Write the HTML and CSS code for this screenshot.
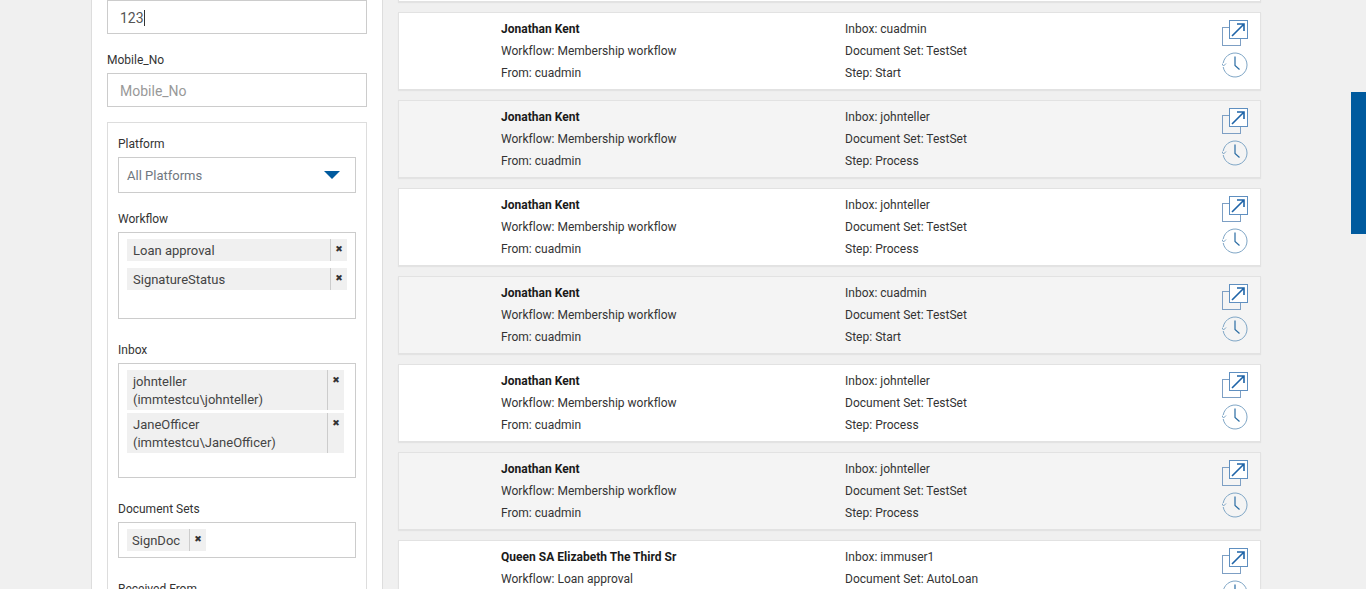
FILE: index.html
```html
<!DOCTYPE html>
<html lang="en">
<head>
    <meta charset="UTF-8">
    <title>Inbox search</title>
    <link rel="stylesheet" href="styles.css">
</head>
<body>
    <svg class="icon-defs" width="0" height="0">
        <symbol id="icon-open" viewBox="0 0 27 27">
            <rect x="0.5" y="7.5" width="18" height="18" fill="none" stroke="#7d9fc4"/>
            <rect x="7.5" y="0.5" width="18" height="18" fill="#fff" stroke="#5f8fc0"/>
            <path d="M10 16 L22 4 M15 4 H22 V11" fill="none" stroke="#1f64a8" stroke-width="1.6"/>
        </symbol>
        <symbol id="icon-history" viewBox="0 0 27 27">
            <path d="M1.2 12 A12 12 0 1 1 1.2 16" fill="none" stroke="#7fa6c6" stroke-width="1"/>
            <path d="M-0.5 12 L1.5 15 L4 12.5" fill="none" stroke="#7fa6c6" stroke-width="1"/>
            <path d="M13 5.5 V14.5 L17.5 18.5" fill="none" stroke="#2a6ca3" stroke-width="1.2"/>
        </symbol>
    </svg>

    <div class="page">
        <aside class="sidebar">
            <div class="field field-cut">
                <div class="text-input value-input">123<span class="caret"></span></div>
            </div>
            <div class="field">
                <label class="field-label">Mobile_No</label>
                <div class="text-input placeholder">Mobile_No</div>
            </div>
            <div class="filter-box">
                <label class="field-label">Platform</label>
                <div class="select-box">
                    <span>All Platforms</span>
                    <span class="select-arrow"></span>
                </div>

                <label class="field-label">Workflow</label>
                <div class="tag-box workflow-box">
                    <div class="tag tag-full"><span class="tag-text">Loan approval</span><span class="tag-remove">✖</span></div>
                    <div class="tag tag-full"><span class="tag-text">SignatureStatus</span><span class="tag-remove">✖</span></div>
                </div>

                <label class="field-label">Inbox</label>
                <div class="tag-box inbox-box">
                    <div class="tag tag-wrap"><span class="tag-text">johnteller<br>(immtestcu\johnteller)</span><span class="tag-remove">✖</span></div>
                    <div class="tag tag-wrap"><span class="tag-text">JaneOfficer<br>(immtestcu\JaneOfficer)</span><span class="tag-remove">✖</span></div>
                </div>

                <label class="field-label">Document Sets</label>
                <div class="tag-box docset-box">
                    <div class="tag"><span class="tag-text">SignDoc</span><span class="tag-remove">✖</span></div>
                </div>

                <label class="field-label">Received From</label>
            </div>
        </aside>

        <main class="results">
            <div class="row row-cut"></div>

            <div class="row">
                <div class="cell">
                    <strong>Jonathan Kent</strong>
                    <span>Workflow: Membership workflow</span>
                    <span>From: cuadmin</span>
                </div>
                <div class="cell">
                    <span>Inbox: cuadmin</span>
                    <span>Document Set: TestSet</span>
                    <span>Step: Start</span>
                </div>
                <div class="row-actions">
                    <svg width="27" height="27"><use href="#icon-open"/></svg>
                    <svg width="27" height="27"><use href="#icon-history"/></svg>
                </div>
            </div>

            <div class="row row-alt">
                <div class="cell">
                    <strong>Jonathan Kent</strong>
                    <span>Workflow: Membership workflow</span>
                    <span>From: cuadmin</span>
                </div>
                <div class="cell">
                    <span>Inbox: johnteller</span>
                    <span>Document Set: TestSet</span>
                    <span>Step: Process</span>
                </div>
                <div class="row-actions">
                    <svg width="27" height="27"><use href="#icon-open"/></svg>
                    <svg width="27" height="27"><use href="#icon-history"/></svg>
                </div>
            </div>

            <div class="row">
                <div class="cell">
                    <strong>Jonathan Kent</strong>
                    <span>Workflow: Membership workflow</span>
                    <span>From: cuadmin</span>
                </div>
                <div class="cell">
                    <span>Inbox: johnteller</span>
                    <span>Document Set: TestSet</span>
                    <span>Step: Process</span>
                </div>
                <div class="row-actions">
                    <svg width="27" height="27"><use href="#icon-open"/></svg>
                    <svg width="27" height="27"><use href="#icon-history"/></svg>
                </div>
            </div>

            <div class="row row-alt">
                <div class="cell">
                    <strong>Jonathan Kent</strong>
                    <span>Workflow: Membership workflow</span>
                    <span>From: cuadmin</span>
                </div>
                <div class="cell">
                    <span>Inbox: cuadmin</span>
                    <span>Document Set: TestSet</span>
                    <span>Step: Start</span>
                </div>
                <div class="row-actions">
                    <svg width="27" height="27"><use href="#icon-open"/></svg>
                    <svg width="27" height="27"><use href="#icon-history"/></svg>
                </div>
            </div>

            <div class="row">
                <div class="cell">
                    <strong>Jonathan Kent</strong>
                    <span>Workflow: Membership workflow</span>
                    <span>From: cuadmin</span>
                </div>
                <div class="cell">
                    <span>Inbox: johnteller</span>
                    <span>Document Set: TestSet</span>
                    <span>Step: Process</span>
                </div>
                <div class="row-actions">
                    <svg width="27" height="27"><use href="#icon-open"/></svg>
                    <svg width="27" height="27"><use href="#icon-history"/></svg>
                </div>
            </div>

            <div class="row row-alt">
                <div class="cell">
                    <strong>Jonathan Kent</strong>
                    <span>Workflow: Membership workflow</span>
                    <span>From: cuadmin</span>
                </div>
                <div class="cell">
                    <span>Inbox: johnteller</span>
                    <span>Document Set: TestSet</span>
                    <span>Step: Process</span>
                </div>
                <div class="row-actions">
                    <svg width="27" height="27"><use href="#icon-open"/></svg>
                    <svg width="27" height="27"><use href="#icon-history"/></svg>
                </div>
            </div>

            <div class="row">
                <div class="cell">
                    <strong>Queen SA Elizabeth The Third Sr</strong>
                    <span>Workflow: Loan approval</span>
                    <span>From: cuadmin</span>
                </div>
                <div class="cell">
                    <span>Inbox: immuser1</span>
                    <span>Document Set: AutoLoan</span>
                    <span>Step: Start</span>
                </div>
                <div class="row-actions">
                    <svg width="27" height="27"><use href="#icon-open"/></svg>
                    <svg width="27" height="27"><use href="#icon-history"/></svg>
                </div>
            </div>
        </main>
    </div>

    <div class="side-tab"></div>
</body>
</html>
```

FILE: styles.css
```css
html, body {
    height: 589px;
    overflow: hidden;
}
body {
    margin: 0;
    background-color: #f0f0f0;
    font-family: Roboto, "Liberation Sans", sans-serif;
    font-size: 12px;
    color: #333;
}
.icon-defs {
    display: none;
}
.page {
    display: flex;
    align-items: flex-start;
    padding-left: 91px;
}
.sidebar {
    box-sizing: border-box;
    width: 292px;
    height: 700px;
    padding: 0 15px;
    background-color: white;
    border-left: 1px solid #ddd;
    border-right: 1px solid #ddd;
}
.field {
    margin-bottom: 15px;
}
.field-cut {
    margin-bottom: 19px;
}
.field-label {
    display: block;
    height: 14px;
    line-height: 14px;
    color: #333;
}
.text-input {
    box-sizing: border-box;
    height: 34px;
    margin-top: 6px;
    padding: 0 12px;
    border: 1px solid #ccc;
    font-size: 14px;
    line-height: 34px;
}
.value-input {
    display: flex;
    align-items: center;
    margin-top: 0;
    padding-top: 2px;
    color: #555;
}
.caret {
    width: 1px;
    height: 16px;
    background-color: #333;
}
.placeholder {
    color: #999;
}
.filter-box {
    box-sizing: border-box;
    height: 560px;
    padding: 14px 10px;
    border: 1px solid #ddd;
}
.filter-box .field-label {
    margin-bottom: 6px;
}
.select-box {
    box-sizing: border-box;
    display: flex;
    justify-content: space-between;
    align-items: center;
    height: 36px;
    margin-bottom: 19px;
    padding: 0 15px 0 8px;
    border: 1px solid #ccc;
    font-size: 13px;
    color: #6f7780;
}
.select-arrow {
    width: 0;
    height: 0;
    border-left: 8px solid transparent;
    border-right: 8px solid transparent;
    border-top: 8px solid #005a9e;
}
.tag-box {
    box-sizing: border-box;
    padding: 6px 8px;
    border: 1px solid #ccc;
    margin-bottom: 24px;
}
.workflow-box {
    height: 87px;
}
.inbox-box {
    height: 115px;
    padding-right: 11px;
}
.docset-box {
    height: 36px;
    display: flex;
}
.tag {
    display: flex;
    height: 22px;
    background-color: #f0f0f0;
    font-size: 13px;
    color: #444;
}
.tag + .tag {
    margin-top: 7px;
}
.tag-wrap {
    height: 40px;
}
.tag-wrap + .tag-wrap {
    margin-top: 3px;
}
.tag-text {
    flex: 1;
    padding: 1px 6px 0;
    line-height: 21px;
}
.docset-box .tag-text {
    padding: 1px 9px 0 5px;
}
.tag-wrap .tag-text {
    padding: 3px 6px 1px;
    line-height: 18px;
}
.tag-remove {
    width: 16px;
    border-left: 1px solid #ccc;
    font-family: "DejaVu Sans", sans-serif;
    font-size: 9px;
    line-height: 21px;
    text-align: center;
    color: #333;
}
.results {
    width: 863px;
    margin-left: 15px;
    margin-top: -76px;
}
.row {
    box-sizing: border-box;
    display: flex;
    height: 78px;
    margin-bottom: 10px;
    padding: 5px 11px 0 102px;
    background-color: white;
    border: 1px solid #e2e2e2;
    box-shadow: 0 1px 1px rgba(0,0,0,0.05);
}
.row-alt {
    background-color: #f4f4f4;
}
.cell {
    display: flex;
    flex-direction: column;
    width: 344px;
    line-height: 22px;
    letter-spacing: 0.015px;
    color: #333;
}
.cell strong {
    color: #1a1a1a;
}
.row-actions {
    display: flex;
    flex-direction: column;
    gap: 4px;
    margin-left: auto;
    margin-top: 2px;
}
.row-actions svg {
    display: block;
    overflow: visible;
}
.side-tab {
    position: absolute;
    top: 92px;
    right: 0;
    width: 15px;
    height: 142px;
    background-color: #005a9e;
}
```
